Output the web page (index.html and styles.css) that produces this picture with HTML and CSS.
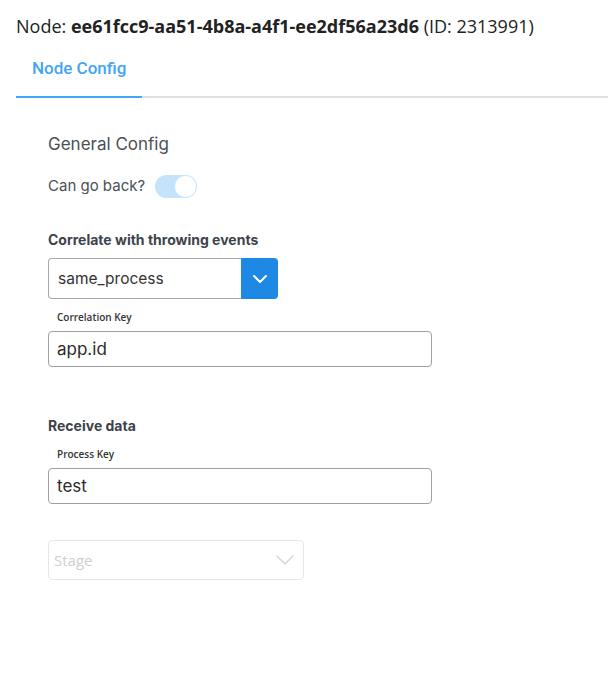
FILE: index.html
```html
<!DOCTYPE html>
<html>
<head>
<meta charset="utf-8">
<link rel="stylesheet" href="styles.css">
</head>
<body>
<div class="page">
  <h1 class="node-title">Node: <b>ee61fcc9-aa51-4b8a-a4f1-ee2df56a23d6</b> (ID: 2313991)</h1>
  <div class="tabs">
    <div class="tab active">Node Config</div>
  </div>
  <div class="panel">
    <h2 class="section-title">General Config</h2>
    <div class="toggle-row">
      <span class="toggle-label">Can go back?</span>
      <span class="toggle"><span class="knob"></span></span>
    </div>

    <h3 class="group-title correlate">Correlate with throwing events</h3>
    <div class="select-group">
      <div class="select-value">same_process</div>
      <div class="select-btn">
        <svg width="14" height="8" viewBox="0 0 14 8"><path d="M1 1 L7 7 L13 1" fill="none" stroke="#fff" stroke-width="2" stroke-linecap="round" stroke-linejoin="round"/></svg>
      </div>
    </div>
    <label class="field-label">Correlation Key</label>
    <div class="text-input">app.id</div>

    <h3 class="group-title receive">Receive data</h3>
    <label class="field-label">Process Key</label>
    <div class="text-input">test</div>

    <div class="stage-select">
      <span class="placeholder">Stage</span>
      <svg width="18" height="10" viewBox="0 0 18 10"><path d="M1 1 L9 9 L17 1" fill="none" stroke="#d6d6d6" stroke-width="1.6" stroke-linecap="round" stroke-linejoin="round"/></svg>
    </div>
  </div>
</div>
</body>
</html>
```
FILE: styles.css
```css
html, body {
  margin: 0;
  padding: 0;
  background: #fff;
}
.page {
  padding-left: 16px;
  font-family: "Inter", "Noto Sans", sans-serif;
}
.node-title {
  margin: 0;
  padding-top: 13px;
  height: 27px;
  font-family: "Open Sans", sans-serif;
  font-weight: 400;
  font-size: 18px;
  line-height: 26px;
  color: #222;
  white-space: nowrap;
}
.node-title b {
  font-weight: 700;
}
.tabs {
  display: flex;
  border-bottom: 2px solid #dde0e4;
}
.tab {
  height: 56px;
  line-height: 56px;
  padding: 0 16px;
  font-family: "Roboto", sans-serif;
  font-weight: 500;
  font-size: 17px;
  color: #42a5f5;
  margin-bottom: -2px;
}
.tab.active {
  border-bottom: 2px solid #42a5f5;
}
.panel {
  padding: 0 32px;
  display: flex;
  flex-direction: column;
  align-items: flex-start;
}
.section-title {
  margin: 34px 0 0;
  font-size: 17px;
  line-height: 24px;
  font-weight: 400;
  color: #495057;
}
.toggle-row {
  margin-top: 18px;
  display: flex;
  align-items: center;
  gap: 10px;
}
.toggle-label {
  font-size: 15px;
  line-height: 24px;
  color: #495057;
}
.toggle {
  width: 42px;
  height: 23px;
  border-radius: 12px;
  background: #c6e3fc;
  display: flex;
  align-items: center;
  justify-content: flex-end;
  padding: 0 1px;
  box-sizing: border-box;
}
.knob {
  width: 21px;
  height: 21px;
  border-radius: 50%;
  background: #fff;
  box-shadow: 0 0 0 0.5px #d5e9fa;
}
.group-title {
  margin: 0;
  font-size: 14px;
  line-height: 20px;
  font-weight: 700;
  color: #3d434a;
}
.group-title.correlate {
  margin-top: 32px;
}
.group-title.receive {
  margin-top: 49px;
}
.select-group {
  margin-top: 8px;
  display: flex;
  height: 41px;
}
.select-value {
  width: 193px;
  box-sizing: border-box;
  border: 1px solid #a8a8a8;
  border-right: none;
  border-radius: 4px 0 0 4px;
  padding-left: 9px;
  font-size: 15.5px;
  line-height: 39px;
  color: #333;
}
.select-btn {
  width: 37px;
  background: #1e88e5;
  border-radius: 0 4px 4px 0;
  display: flex;
  align-items: center;
  justify-content: center;
}
.field-label {
  display: block;
  margin: 10px 0 0 9px;
  font-family: "Open Sans", sans-serif;
  font-size: 10px;
  font-weight: 600;
  line-height: 16px;
  color: #333;
}
.text-input {
  margin-top: 6px;
  width: 384px;
  height: 36px;
  box-sizing: border-box;
  border: 1px solid #a0a0a0;
  border-radius: 4px;
  padding-left: 8px;
  font-size: 17px;
  line-height: 34px;
  color: #2b2b2b;
}
.stage-select {
  margin-top: 36px;
  width: 256px;
  height: 40px;
  box-sizing: border-box;
  border: 1px solid #e6e6e6;
  border-radius: 4px;
  display: flex;
  align-items: center;
  justify-content: space-between;
  padding: 0 9px 0 5px;
}
.placeholder {
  font-family: "Open Sans", sans-serif;
  font-size: 15px;
  color: #cfcfcf;
}
```
